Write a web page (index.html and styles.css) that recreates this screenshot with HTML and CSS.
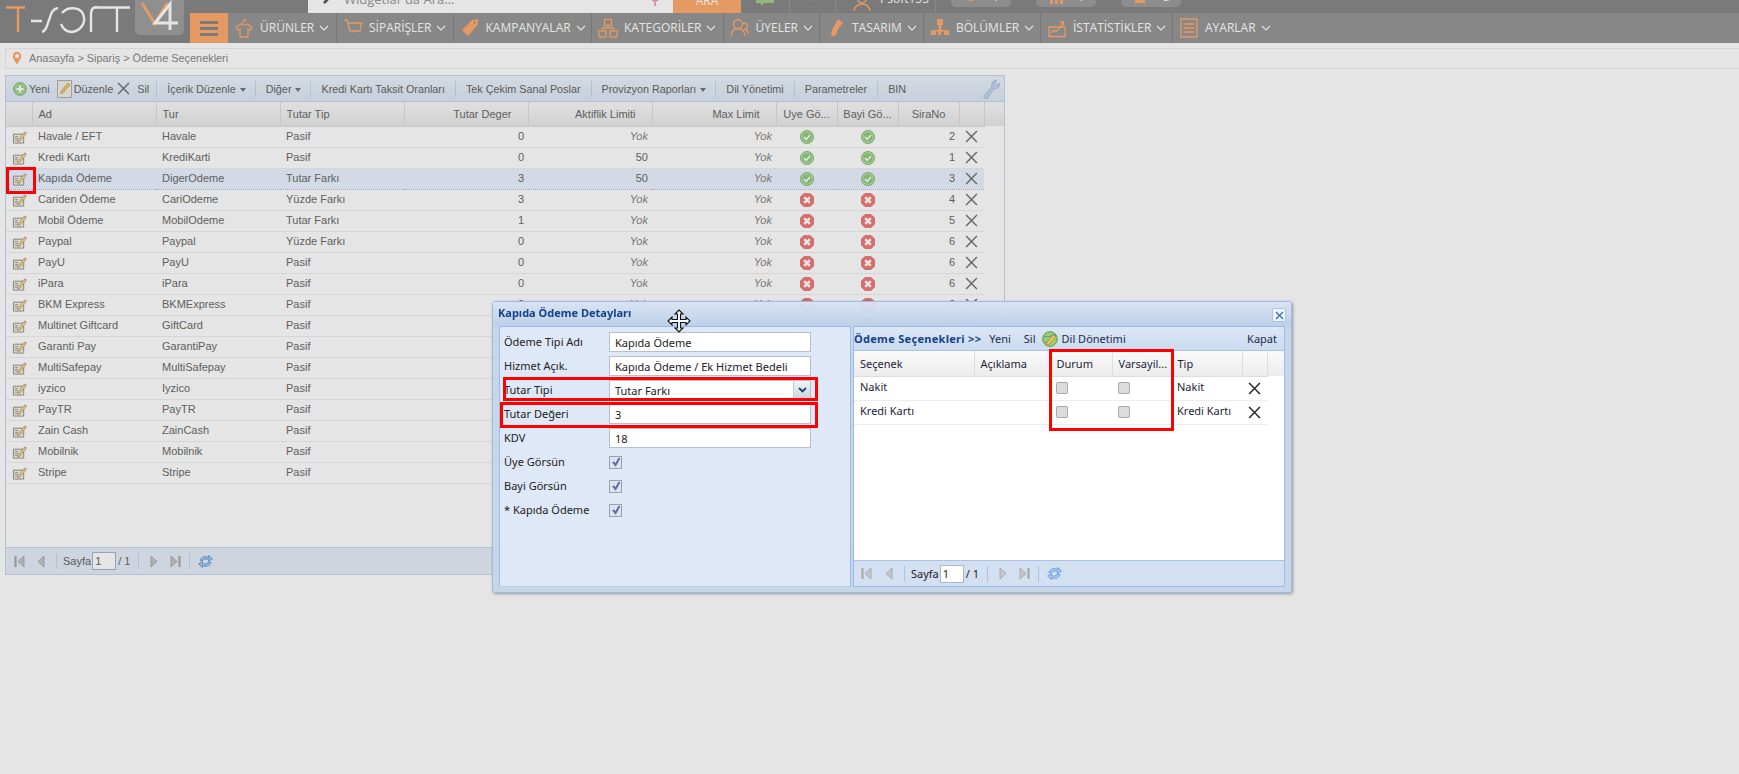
FILE: index.html
```html
<!DOCTYPE html>
<html lang="tr">
<head>
  <meta charset="UTF-8" />
  <meta name="viewport" content="width=device-width, initial-scale=1.0" />
  <title>Ödeme Seçenekleri</title>
  <link rel="stylesheet" href="styles.css">
</head>
<body>
  <!-- shared icons -->
  <svg class="sprite" width="0" height="0">
    <symbol id="i-ok" viewBox="0 0 14 14"><circle cx="7" cy="7" r="6.600" fill="#b4e0a6" stroke="#7fb56f" stroke-width=".8"/><circle cx="7" cy="7" r="4.800" fill="#93cb82"/><path d="M4 7l2.200 2.400L10 5" fill="none" stroke="#fff" stroke-width="1.600"/></symbol>
    <symbol id="i-no" viewBox="0 0 14 14"><path d="M4 .4h6L13.600 4v6L10 13.600H4L.4 10V4z" fill="#f27878" stroke="#e06a6a" stroke-width=".8"/><path d="M4.200 4.200l5.600 5.600M9.800 4.200l-5.600 5.600" stroke="#fff" stroke-width="2.600"/></symbol>
    <symbol id="i-del" viewBox="0 0 12 12"><path d="M1 1l10 10M11 1L1 11" fill="none" stroke="currentColor" stroke-width="1.400"/></symbol>
    <symbol id="i-edit" viewBox="0 0 16 15"><path d="M1.500 4.500h11v9.500h-11z" fill="#f6f4ec" stroke="#8d8d86"/><path d="M3 7h3.500M3 9h3.500M3 11h3.500" stroke="#9a9a92"/><path d="M6.500 10.500L13 2.500l2 1.500-6.500 8-2.500.8z" fill="#f0d596" stroke="#b39a64" stroke-width=".7"/><path d="M13 2.500l2 1.500.7-1L13.700 1.500z" fill="#d9907f"/></symbol>
    <symbol id="i-first" viewBox="0 0 11 13"><path d="M1.500 1v11" stroke="#a8a8a8" stroke-width="2.200"/><path d="M10 1v11L4 6.500z" fill="#c6c6c6" stroke="#a2a2a2" stroke-width=".8"/></symbol>
    <symbol id="i-prev" viewBox="0 0 8 13"><path d="M7 1v11L1 6.500z" fill="#c6c6c6" stroke="#a2a2a2" stroke-width=".8"/></symbol>
    <symbol id="i-next" viewBox="0 0 8 13"><path d="M1 1v11l6-5.500z" fill="#c6c6c6" stroke="#a2a2a2" stroke-width=".8"/></symbol>
    <symbol id="i-last" viewBox="0 0 11 13"><path d="M9.500 1v11" stroke="#a8a8a8" stroke-width="2.200"/><path d="M1 1v11l6-5.500z" fill="#c6c6c6" stroke="#a2a2a2" stroke-width=".8"/></symbol>
    <symbol id="i-refresh" viewBox="0 0 15 15"><path d="M2 6.500C3 3 7 1.500 10.500 3.500V1.500L14.500 5l-4 2.500V5.500C8 4.500 6 5 5 6.500z" fill="#a6cbf2" stroke="#4a8ad4" stroke-width=".7"/><path d="M13 8.500C12 12 8 13.500 4.500 11.500v2L.5 10l4-2.500v2c2.500 1 4.500.5 5.500-1z" fill="#a6cbf2" stroke="#4a8ad4" stroke-width=".7"/></symbol>
  </svg>

  <header class="topbar">
    <a class="logo" aria-label="T-soft V4">
      <svg width="190" height="43" viewBox="0 0 190 43" fill="none" stroke-width="2.400">
        <path d="M6 7.500h19M18 7.500V32" stroke="#ffab6f"/>
        <path d="M31 21h11M58 8c-6 1-7 6-9 12s-3 11-7 12" stroke="#fff"/>
        <path d="M62 13c5-6 17-7 21 1 4 9-3 17-11 18-5 0-9-3-11-8" stroke="#fff"/>
        <path d="M91 32V14c0-5 2-7 6-7M94 7.500h36M117 7.500V32" stroke="#fff"/>
        <path d="M135 0h49v30a5 5 0 0 1-5 5h-39a5 5 0 0 1-5-5z" fill="#a0a0a0" stroke="none"/>
        <path d="M142 3l13 21L167 3" stroke="#ffab6f" stroke-width="3"/>
        <path d="M170 30V4l-15 19h23" stroke="#fff" stroke-width="3"/>
      </svg>
    </a>
    <div class="topbar-main">
      <div class="top-row">
        <div class="search">
          <svg class="search-ico" width="14" height="14" viewBox="0 0 14 14"><path d="M2 12l4-4" stroke="#555" stroke-width="2.500"/><circle cx="9" cy="5" r="3.500" fill="none" stroke="#777"/></svg>
          <span>Widgetlar'da Ara...</span>
          <svg class="search-pin" width="12" height="16" viewBox="0 0 12 16"><circle cx="6" cy="6" r="4" fill="none" stroke="#e88fa8" stroke-width="1.500"/><path d="M6 10v5" stroke="#e88fa8" stroke-width="1.500"/></svg>
        </div>
        <button class="search-btn">ARA</button>
        <div class="top-cell top-chat"><svg width="18" height="16" viewBox="0 0 18 16"><path d="M0 0h18v13H8l-3 3v-3H0z" fill="#a6cf8a"/></svg></div>
        <div class="top-cell top-bell"><svg width="18" height="16" viewBox="0 0 18 16"><path d="M3 12c1-6 2-9 6-9s5 3 6 9z" fill="#8d8d8d"/></svg></div>
        <div class="top-cell top-user"><svg width="20" height="16" viewBox="0 0 20 16" fill="none"><path d="M2 15c1-5 4-7 8-7s7 2 8 7" stroke="#ffab6f" stroke-width="1.500"/><circle cx="10" cy="3" r="4" stroke="#ffab6f" stroke-width="1.500"/></svg><span>Psoft155</span></div>
        <div class="top-pills">
          <div class="pill"><svg width="16" height="16" viewBox="0 0 16 16"><circle cx="8" cy="5" r="5" fill="none" stroke="#ffab6f" stroke-width="2"/></svg><span>1</span></div>
          <div class="pill"><svg width="16" height="16" viewBox="0 0 16 16"><path d="M2 6h3v8H2zM7 6h3v8H7zM12 6h3v8h-3z" fill="#ffab6f"/></svg><span>1</span></div>
          <div class="pill"><svg width="16" height="16" viewBox="0 0 16 16"><path d="M2 6h10v7H2z" fill="#ffab6f"/></svg><span>a</span></div>
        </div>
      </div>
      <nav class="nav">
        <button class="nav-menu" aria-label="Menü"><span></span><span></span><span></span></button>
        <a class="nav-item"><svg class="nav-ico" viewBox="0 0 20 20"><path d="M7 6L2 9l1.500 3 2.500-1v8h8v-8l2.500 1L18 9l-5-3c-1 1.500-5 1.500-6 0zM8 6c0-2 2-1.500 2-3.500a1 1 0 1 1 2 .5" /></svg><span>ÜRÜNLER</span><svg class="chev" viewBox="0 0 10 6"><path d="M1 1l4 4 4-4"/></svg></a>
        <a class="nav-item"><svg class="nav-ico" viewBox="0 0 20 20"><path d="M1 2h3l3 11h10l1.500-8H5M8 17.500h.5M15 17.500h.5"/></svg><span>SİPARİŞLER</span><svg class="chev" viewBox="0 0 10 6"><path d="M1 1l4 4 4-4"/></svg></a>
        <a class="nav-item"><svg class="nav-ico solid" viewBox="0 0 20 20"><path d="M12 2l6-1-.5 6L8 18l-6-6z"/><circle cx="14.500" cy="4.500" r="1.200" fill="#979797"/></svg><span>KAMPANYALAR</span><svg class="chev" viewBox="0 0 10 6"><path d="M1 1l4 4 4-4"/></svg></a>
        <a class="nav-item"><svg class="nav-ico" viewBox="0 0 20 20"><path d="M6.500 1.500h7v6h-7zM1 13h7v6H1zM12 13h7v6h-7zM10 7.500V10M4.500 13v-3h11v3"/></svg><span>KATEGORİLER</span><svg class="chev" viewBox="0 0 10 6"><path d="M1 1l4 4 4-4"/></svg></a>
        <a class="nav-item"><svg class="nav-ico" viewBox="0 0 20 20"><circle cx="8" cy="6" r="4.500"/><path d="M1 18c.5-5 3-7.500 7-7.500s6.500 2.500 7 7.500M13 5.500a3 3 0 1 1 1 5.500c2.500.5 4 2 4.500 4.500"/></svg><span>ÜYELER</span><svg class="chev" viewBox="0 0 10 6"><path d="M1 1l4 4 4-4"/></svg></a>
        <a class="nav-item"><svg class="nav-ico solid" viewBox="0 0 20 20"><path d="M12 1l5 4-5 6-1 4-3 4-3-2 1-5 2-4z"/></svg><span>TASARIM</span><svg class="chev" viewBox="0 0 10 6"><path d="M1 1l4 4 4-4"/></svg></a>
        <a class="nav-item"><svg class="nav-ico solid" viewBox="0 0 20 20"><path d="M7 1h6v6h-1.500v5H19v5h-5v-3.500h-3v3.500H8v-3.500H6V17H1v-5h7.500V7H7z"/></svg><span>BÖLÜMLER</span><svg class="chev" viewBox="0 0 10 6"><path d="M1 1l4 4 4-4"/></svg></a>
        <a class="nav-item"><svg class="nav-ico" viewBox="0 0 20 20"><path d="M1 18.500h18M2 18.500V9h16v9.500M4 15l3-3 2 2 4-5 3-5M13 4h3.500v3.500"/></svg><span>İSTATİSTİKLER</span><svg class="chev" viewBox="0 0 10 6"><path d="M1 1l4 4 4-4"/></svg></a>
        <a class="nav-item nav-last"><svg class="nav-ico" viewBox="0 0 20 20"><path d="M2 1h16v18H2zM4.500 6h11M4.500 10h11M4.500 14h11M12 4.500v3M7 8.500v3M11 12.500v3"/></svg><span>AYARLAR</span><svg class="chev" viewBox="0 0 10 6"><path d="M1 1l4 4 4-4"/></svg></a>
      </nav>
    </div>
  </header>

  <div class="crumbs">
    <svg width="10" height="14" viewBox="0 0 10 14"><path d="M5 13.500C2 9 .8 7 .8 5a4.200 4.200 0 0 1 8.400 0c0 2-1.200 4-4.200 8.500z" fill="#ffab6f"/><circle cx="5" cy="5" r="2" fill="#fff"/></svg>
    <span>Anasayfa &gt; Sipariş &gt; Ödeme Seçenekleri</span>
  </div>

  <section class="panel">
    <div class="toolbar">
      <svg class="tb-plus" width="14" height="14" viewBox="0 0 14 14"><circle cx="7" cy="7" r="6.400" fill="#a7d69a" stroke="#84b878"/><path d="M7 3.500v7M3.500 7h7" stroke="#fff" stroke-width="2"/></svg>
      <a class="tb-yeni">Yeni</a>
      <svg class="tb-note" width="15" height="18" viewBox="0 0 15 18"><path d="M.5.500h14v17H.5z" fill="#f1efe8" stroke="#b2b2aa"/><path d="M3.500 14l1-3.500L11 3l2 2-6.500 7.500z" fill="#f2c46c" stroke="#c49a4c" stroke-width=".6"/></svg>
      <a class="tb-duz">Düzenle</a>
      <svg class="tb-x" width="13" height="13"><use href="#i-del"/></svg>
      <a class="tb-sil">Sil</a>
      <i class="sep sep-first"></i>
      <a>İçerik Düzenle<b class="caret"></b></a>
      <i class="sep"></i>
      <a>Diğer<b class="caret"></b></a>
      <i class="sep"></i>
      <a>Kredi Kartı Taksit Oranları</a>
      <i class="sep"></i>
      <a>Tek Çekim Sanal Poslar</a>
      <i class="sep"></i>
      <a>Provizyon Raporları<b class="caret"></b></a>
      <i class="sep"></i>
      <a>Dil Yönetimi</a>
      <i class="sep"></i>
      <a>Parametreler</a>
      <i class="sep"></i>
      <a>BIN</a>
      <svg class="tb-wrench" width="17" height="20" viewBox="0 0 17 20"><path d="M1 17L9 7c-1-3 1-6 5-6l-2 3 2 2 2.500-2c.5 4-2.500 6.500-5.500 5.500L4 20c-2 0-3.500-1-3-3z" fill="#c6d6ee" stroke="#9db6da" stroke-width=".7"/></svg>
    </div>

    <div class="grid">
      <table class="list">
        <colgroup><col class="c-ico"><col class="c-w"><col class="c-w"><col class="c-w"><col class="c-w"><col class="c-w"><col class="c-w"><col class="c-s"><col class="c-s"><col class="c-s"><col class="c-ico2"></colgroup>
        <thead>
          <tr><th></th><th>Ad</th><th>Tur</th><th>Tutar Tip</th><th class="num">Tutar Deger</th><th class="num">Aktiflik Limiti</th><th class="num">Max Limit</th><th class="mid">Uye Gö...</th><th class="mid">Bayi Gö...</th><th class="mid">SiraNo</th><th></th></tr>
        </thead>
        <tbody>
          <tr><td class="ic"><svg width="15" height="14"><use href="#i-edit"/></svg></td><td>Havale / EFT</td><td>Havale</td><td>Pasif</td><td class="val">0</td><td class="val"><em>Yok</em></td><td class="val"><em>Yok</em></td><td class="ic"><svg width="14" height="14"><use href="#i-ok"/></svg></td><td class="ic"><svg width="14" height="14"><use href="#i-ok"/></svg></td><td class="val">2</td><td class="ic"><svg class="del" width="13" height="13"><use href="#i-del"/></svg></td></tr>
          <tr><td class="ic"><svg width="15" height="14"><use href="#i-edit"/></svg></td><td>Kredi Kartı</td><td>KrediKarti</td><td>Pasif</td><td class="val">0</td><td class="val">50</td><td class="val"><em>Yok</em></td><td class="ic"><svg width="14" height="14"><use href="#i-ok"/></svg></td><td class="ic"><svg width="14" height="14"><use href="#i-ok"/></svg></td><td class="val">1</td><td class="ic"><svg class="del" width="13" height="13"><use href="#i-del"/></svg></td></tr>
          <tr class="sel"><td class="ic"><svg width="15" height="14"><use href="#i-edit"/></svg></td><td>Kapıda Ödeme</td><td>DigerOdeme</td><td>Tutar Farkı</td><td class="val">3</td><td class="val">50</td><td class="val"><em>Yok</em></td><td class="ic"><svg width="14" height="14"><use href="#i-ok"/></svg></td><td class="ic"><svg width="14" height="14"><use href="#i-ok"/></svg></td><td class="val">3</td><td class="ic"><svg class="del" width="13" height="13"><use href="#i-del"/></svg></td></tr>
          <tr><td class="ic"><svg width="15" height="14"><use href="#i-edit"/></svg></td><td>Cariden Ödeme</td><td>CariOdeme</td><td>Yüzde Farkı</td><td class="val">3</td><td class="val"><em>Yok</em></td><td class="val"><em>Yok</em></td><td class="ic"><svg width="14" height="14"><use href="#i-no"/></svg></td><td class="ic"><svg width="14" height="14"><use href="#i-no"/></svg></td><td class="val">4</td><td class="ic"><svg class="del" width="13" height="13"><use href="#i-del"/></svg></td></tr>
          <tr><td class="ic"><svg width="15" height="14"><use href="#i-edit"/></svg></td><td>Mobil Ödeme</td><td>MobilOdeme</td><td>Tutar Farkı</td><td class="val">1</td><td class="val"><em>Yok</em></td><td class="val"><em>Yok</em></td><td class="ic"><svg width="14" height="14"><use href="#i-no"/></svg></td><td class="ic"><svg width="14" height="14"><use href="#i-no"/></svg></td><td class="val">5</td><td class="ic"><svg class="del" width="13" height="13"><use href="#i-del"/></svg></td></tr>
          <tr><td class="ic"><svg width="15" height="14"><use href="#i-edit"/></svg></td><td>Paypal</td><td>Paypal</td><td>Yüzde Farkı</td><td class="val">0</td><td class="val"><em>Yok</em></td><td class="val"><em>Yok</em></td><td class="ic"><svg width="14" height="14"><use href="#i-no"/></svg></td><td class="ic"><svg width="14" height="14"><use href="#i-no"/></svg></td><td class="val">6</td><td class="ic"><svg class="del" width="13" height="13"><use href="#i-del"/></svg></td></tr>
          <tr><td class="ic"><svg width="15" height="14"><use href="#i-edit"/></svg></td><td>PayU</td><td>PayU</td><td>Pasif</td><td class="val">0</td><td class="val"><em>Yok</em></td><td class="val"><em>Yok</em></td><td class="ic"><svg width="14" height="14"><use href="#i-no"/></svg></td><td class="ic"><svg width="14" height="14"><use href="#i-no"/></svg></td><td class="val">6</td><td class="ic"><svg class="del" width="13" height="13"><use href="#i-del"/></svg></td></tr>
          <tr><td class="ic"><svg width="15" height="14"><use href="#i-edit"/></svg></td><td>iPara</td><td>iPara</td><td>Pasif</td><td class="val">0</td><td class="val"><em>Yok</em></td><td class="val"><em>Yok</em></td><td class="ic"><svg width="14" height="14"><use href="#i-no"/></svg></td><td class="ic"><svg width="14" height="14"><use href="#i-no"/></svg></td><td class="val">6</td><td class="ic"><svg class="del" width="13" height="13"><use href="#i-del"/></svg></td></tr>
          <tr><td class="ic"><svg width="15" height="14"><use href="#i-edit"/></svg></td><td>BKM Express</td><td>BKMExpress</td><td>Pasif</td><td class="val">0</td><td class="val"><em>Yok</em></td><td class="val"><em>Yok</em></td><td class="ic"><svg width="14" height="14"><use href="#i-no"/></svg></td><td class="ic"><svg width="14" height="14"><use href="#i-no"/></svg></td><td class="val">6</td><td class="ic"><svg class="del" width="13" height="13"><use href="#i-del"/></svg></td></tr>
          <tr><td class="ic"><svg width="15" height="14"><use href="#i-edit"/></svg></td><td>Multinet Giftcard</td><td>GiftCard</td><td>Pasif</td><td class="val">0</td><td class="val"><em>Yok</em></td><td class="val"><em>Yok</em></td><td class="ic"><svg width="14" height="14"><use href="#i-no"/></svg></td><td class="ic"><svg width="14" height="14"><use href="#i-no"/></svg></td><td class="val">7</td><td class="ic"><svg class="del" width="13" height="13"><use href="#i-del"/></svg></td></tr>
          <tr><td class="ic"><svg width="15" height="14"><use href="#i-edit"/></svg></td><td>Garanti Pay</td><td>GarantiPay</td><td>Pasif</td><td colspan="7"></td></tr>
          <tr><td class="ic"><svg width="15" height="14"><use href="#i-edit"/></svg></td><td>MultiSafepay</td><td>MultiSafepay</td><td>Pasif</td><td colspan="7"></td></tr>
          <tr><td class="ic"><svg width="15" height="14"><use href="#i-edit"/></svg></td><td>iyzico</td><td>Iyzico</td><td>Pasif</td><td colspan="7"></td></tr>
          <tr><td class="ic"><svg width="15" height="14"><use href="#i-edit"/></svg></td><td>PayTR</td><td>PayTR</td><td>Pasif</td><td colspan="7"></td></tr>
          <tr><td class="ic"><svg width="15" height="14"><use href="#i-edit"/></svg></td><td>Zain Cash</td><td>ZainCash</td><td>Pasif</td><td colspan="7"></td></tr>
          <tr><td class="ic"><svg width="15" height="14"><use href="#i-edit"/></svg></td><td>Mobilnik</td><td>Mobilnik</td><td>Pasif</td><td colspan="7"></td></tr>
          <tr><td class="ic"><svg width="15" height="14"><use href="#i-edit"/></svg></td><td>Stripe</td><td>Stripe</td><td>Pasif</td><td colspan="7"></td></tr>
        </tbody>
      </table>
    </div>

    <div class="pager">
      <svg class="pg-first" width="11" height="13"><use href="#i-first"/></svg>
      <svg class="pg-prev" width="8" height="13"><use href="#i-prev"/></svg>
      <i class="sep sep-a"></i>
      <span>Sayfa</span>
      <input class="pg-input" value="1">
      <span>/ 1</span>
      <i class="sep sep-b"></i>
      <svg class="pg-next" width="8" height="13"><use href="#i-next"/></svg>
      <svg class="pg-last" width="11" height="13"><use href="#i-last"/></svg>
      <i class="sep sep-c"></i>
      <svg class="pg-ref" width="15" height="15"><use href="#i-refresh"/></svg>
    </div>
  </section>

  <div class="mask"></div>

  <div class="win">
    <div class="win-title">
      <span>Kapıda Ödeme Detayları</span>
      <button class="win-close" aria-label="Kapat"><svg width="9" height="9" viewBox="0 0 9 9"><path d="M1 1l7 7M8 1L1 8" stroke="#2f6fb8" stroke-width="1.400"/></svg></button>
    </div>
    <div class="win-body">
      <form class="form">
        <label class="row"><span>Ödeme Tipi Adı</span><input value="Kapıda Ödeme"></label>
        <label class="row"><span>Hizmet Açık.</span><input value="Kapıda Ödeme / Ek Hizmet Bedeli"></label>
        <label class="row"><span>Tutar Tipi</span><div class="combo"><input value="Tutar Farkı"><b class="combo-btn"><svg width="9" height="6" viewBox="0 0 9 6"><path d="M1 1l3.500 3.500L8 1" fill="none" stroke="#1f3f7a" stroke-width="1.800"/></svg></b></div></label>
        <label class="row"><span>Tutar Değeri</span><input value="3"></label>
        <label class="row"><span>KDV</span><input value="18"></label>
        <div class="row"><span>Üye Görsün</span><i class="tick"><svg width="10" height="10" viewBox="0 0 10 10"><path d="M2 5l2.500 3L8.500 1" fill="none" stroke="#5a6fa8" stroke-width="2"/></svg></i></div>
        <div class="row"><span>Bayi Görsün</span><i class="tick"><svg width="10" height="10" viewBox="0 0 10 10"><path d="M2 5l2.500 3L8.500 1" fill="none" stroke="#5a6fa8" stroke-width="2"/></svg></i></div>
        <div class="row"><span>* Kapıda Ödeme</span><i class="tick"><svg width="10" height="10" viewBox="0 0 10 10"><path d="M2 5l2.500 3L8.500 1" fill="none" stroke="#5a6fa8" stroke-width="2"/></svg></i></div>
      </form>

      <div class="options">
        <div class="opt-bar">
          <strong>Ödeme Seçenekleri &gt;&gt;</strong>
          <a class="opt-yeni">Yeni</a>
          <a class="opt-sil">Sil</a>
          <svg class="opt-globe" width="16" height="16" viewBox="0 0 16 16"><circle cx="8" cy="8" r="7.300" fill="#9ccf6a" stroke="#5f9a3e"/><path d="M2 6c3-2 4 1 7-1s3-2 5 0M3 12c2-2 4-1 6-3" stroke="#4f8fc0" fill="none"/><path d="M4 15l1-4 7-7 2 2-7 7z" fill="#f2c060" stroke="#a9803c" stroke-width=".6"/></svg>
          <a>Dil Dönetimi</a>
          <a class="opt-close">Kapat</a>
        </div>
        <div class="opt-list">
          <table class="opts">
            <colgroup><col class="o-1"><col class="o-2"><col class="o-3"><col class="o-4"><col class="o-5"><col class="o-6"></colgroup>
            <thead><tr><th>Seçenek</th><th>Açıklama</th><th>Durum</th><th>Varsayil...</th><th>Tip</th><th></th></tr></thead>
            <tbody>
              <tr><td>Nakit</td><td></td><td><i class="box"></i></td><td><i class="box"></i></td><td>Nakit</td><td class="opt-del"><svg width="13" height="13"><use href="#i-del"/></svg></td></tr>
              <tr><td>Kredi Kartı</td><td></td><td><i class="box"></i></td><td><i class="box"></i></td><td>Kredi Kartı</td><td class="opt-del"><svg width="13" height="13"><use href="#i-del"/></svg></td></tr>
            </tbody>
          </table>
        </div>
        <div class="pager opt-pager">
          <svg class="pg-first" width="11" height="13"><use href="#i-first"/></svg>
          <svg class="pg-prev" width="8" height="13"><use href="#i-prev"/></svg>
          <i class="sep sep-a"></i>
          <span>Sayfa</span>
          <input class="pg-input" value="1">
          <span>/ 1</span>
          <i class="sep sep-b"></i>
          <svg class="pg-next" width="8" height="13"><use href="#i-next"/></svg>
          <svg class="pg-last" width="11" height="13"><use href="#i-last"/></svg>
          <i class="sep sep-c"></i>
          <svg class="pg-ref" width="15" height="15"><use href="#i-refresh"/></svg>
        </div>
      </div>
    </div>
  </div>

  <!-- red marks from the help screenshot -->
  <div class="mark mark-edit"></div>
  <div class="mark mark-tip"></div>
  <div class="mark mark-deger"></div>
  <div class="mark mark-durum"></div>

  <svg class="drag-cursor" width="24" height="24" viewBox="0 0 24 24"><path d="M12 1l4 4h-2.500v5.500H19V8l4 4-4 4v-2.500h-5.500V19H16l-4 4-4-4h2.500v-5.500H5V16l-4-4 4-4v2.500h5.500V5H8z" fill="#fff" stroke="#111" stroke-width="1.100"/></svg>
</body>
</html>
```

FILE: styles.css
```css
* { box-sizing: border-box; }
html, body { height: 100%; }
body { margin: 0; position: relative; overflow: hidden; background: #fff; font-family: "Liberation Sans", Arial, sans-serif; font-size: 11px; color: #6b6b6b; }
.sprite { position: absolute; }
svg { display: block; flex: none; }
a { cursor: pointer; }
input { font: inherit; }

/* header */
.topbar { display: flex; height: 43px; background: #888; }
.logo { width: 190px; flex: none; }
.topbar-main { flex: 1; display: flex; flex-direction: column; min-width: 0; }
.top-row { height: 13px; display: flex; align-items: flex-end; overflow: hidden; padding-left: 118px; color: #fff; font-family: "Open Sans", sans-serif; font-size: 12px; }
.search { width: 365px; height: 13px; background: #fff; color: #999; display: flex; align-items: flex-end; padding-left: 14px; gap: 8px; line-height: 15px; font-size: 13px; }
.search span { flex: 1; height: 15px; margin-bottom: 6px; }
.search-ico { margin-bottom: 8px; }
.search-pin { margin: 0 12px 6px 0; }
.search-btn { width: 68px; height: 13px; border: 0; padding: 0 0 12px; background: #ffab6f; color: #fff; font: inherit; line-height: 0; }
.top-cell { height: 13px; display: flex; align-items: flex-end; justify-content: center; border-right: 1px solid #9a9a9a; gap: 8px; }
.top-chat { width: 49px; }
.top-chat svg { margin-bottom: 7px; }
.top-bell { width: 46px; }
.top-bell svg { margin-bottom: 8px; }
.top-user { width: 100px; justify-content: flex-start; padding-left: 16px; line-height: 15px; }
.top-user svg { margin-bottom: 1px; }
.top-user span { margin-bottom: 7px; }
.top-pills { display: flex; align-self: flex-start; gap: 25px; padding-left: 15px; }
.pill { width: 60px; height: 7px; overflow: hidden; background: #9e9e9e; border-radius: 0 0 5px 5px; display: flex; align-items: flex-end; justify-content: center; gap: 14px; line-height: 15px; }
.pill svg { margin-bottom: 1px; }
.pill span { margin-bottom: 3px; }

.nav { height: 30px; display: grid; grid-template-columns: 38px 109px 116.5px 138.5px 131.5px 96.5px 104px 117px 132px 117px; justify-content: start; background: #979797; }
.nav-menu { border: 0; padding: 0 10px; background: #ffab6f; display: flex; flex-direction: column; justify-content: center; gap: 3px; }
.nav-menu span { display: block; height: 3px; background: #8a8a8a; }
.nav-item { display: flex; align-items: center; padding: 0 0 1px 6px; color: #fff; font-family: "Open Sans", sans-serif; font-size: 12px; border-right: 1px solid #848484; white-space: nowrap; }
.nav-last { border-right: 0; }
.nav-ico { width: 20px; height: 20px; margin-right: 6px; fill: none; stroke: #ffab6f; stroke-width: 1.300; }
.nav-ico.solid { fill: #ffab6f; stroke: none; }
.chev { width: 10px; height: 6px; margin-left: 5px; fill: none; stroke: #fff; stroke-width: 1.100; }

/* breadcrumb */
.crumbs { height: 21px; margin: 5px 0 6px 5px; display: flex; align-items: center; gap: 7px; padding: 0 0 2px 6px; background: #fff; border: 1px solid #ececec; border-right: 0; color: #888; font-size: 10.900px; }

/* main panel */
.panel { width: 1000px; height: 500px; margin-left: 5px; display: flex; flex-direction: column; border: 1px solid #c5d8f0; }
.toolbar { height: 26px; display: flex; align-items: center; padding-left: 7px; background: linear-gradient(#ecf3fc, #dde8f5); border-bottom: 1px solid #c5d8f0; white-space: nowrap; color: #666; font-size: 10.800px; }
.toolbar .sep { margin: 0 10px; }
.toolbar .sep-first { margin-left: 7px; }
.sep { display: block; width: 1px; height: 16px; background: #c5d8f0; flex: none; }
.caret { display: inline-block; margin: 0 -1px 0 4px; vertical-align: 1px; border: 3px solid transparent; border-top: 4px solid #777; border-bottom: 0; }
.tb-yeni { margin-left: 2px; }
.tb-note { margin: 0 2px 0 7px; }
.tb-x { margin-left: 4px; color: #777; }
.tb-sil { margin-left: 7px; }
.tb-wrench { margin-left: auto; margin-right: 4px; }

.grid { flex: 1; background: #fff linear-gradient(#fafafa, #e9e9e9) 0 0 / 100% 24px no-repeat; }
.list { width: 978px; table-layout: fixed; border-collapse: collapse; }
.c-ico { width: 26px; } .c-w { width: 124px; } .c-s { width: 61px; } .c-ico2 { width: 25px; }
.list th { height: 24px; padding: 0 4px 0 6px; font-weight: normal; text-align: left; color: #6b6b6b; border-right: 1px solid #ddd; border-bottom: 1px solid #ddd; white-space: nowrap; overflow: hidden; }
.list th.num { text-align: right; padding-right: 16px; }
.list th.mid { text-align: center; padding: 0; }
.list td { height: 21px; padding: 0 4px 2px 6px; border-bottom: 1px solid #efefef; white-space: nowrap; overflow: hidden; }
.list td.val { text-align: right; padding-right: 4px; }
.list td.ic { padding: 0; }
.list td.ic svg { margin: 0 auto; }
.list em { color: #888; }
.list .del { color: #777; }
.list .sel td { background: #ecf3ff; border-top: 1px dotted #a8c0ea; border-bottom: 1px dotted #a8c0ea; }

.pager { height: 27px; flex: none; display: flex; align-items: center; padding-left: 8px; background: #e6eef9; border-top: 1px solid #c5d8f0; color: #666; white-space: nowrap; }
.pg-prev { margin-left: 12px; }
.sep-a { margin: 0 6px 0 11px; }
.sep-b { margin: 0 11px 0 8px; }
.sep-c { margin: 0 8px 0 8px; }
.pg-input { width: 24px; height: 18px; margin: 0 2px 0 1px; padding: 0 2px; border: 1px solid #a8b8cc; background: #fff; color: inherit; }
.pg-last { margin-left: 12px; }

/* dimmed page */
.mask { position: fixed; inset: 0; background: rgba(0, 0, 0, .1); }

/* detail window */
.win { position: absolute; left: 492px; top: 301px; width: 800px; height: 292px; display: flex; flex-direction: column; border: 1px solid #9dbbe4; border-radius: 3px; background: rgba(196, 212, 234, .9); box-shadow: 1px 1px 3px rgba(0, 0, 0, .35); font-family: "Noto Sans", sans-serif; color: #222; }
.win-title { height: 24px; flex: none; display: flex; align-items: center; justify-content: space-between; padding: 0 5px 4px; background: linear-gradient(rgba(222, 232, 245, .75), rgba(186, 206, 232, .85)); color: #15428b; font-weight: bold; font-size: 11px; }
.win-close { width: 14px; height: 14px; margin-top: 6px; padding: 0; display: flex; align-items: center; justify-content: center; border: 1px solid #a7c3e6; border-radius: 2px; background: #f1f6fd; }
.win-body { flex: 1; display: flex; gap: 2px; padding: 0 6px 5px; min-height: 0; }

.form { width: 352px; flex: none; padding: 3px 0 0 4px; background: #dfe8f6; border: 1px solid #99bbe8; border-bottom-color: #b8cce8; }
.row { height: 24px; display: flex; align-items: center; }
.row > span { width: 105px; flex: none; margin-bottom: 1px; }
.row input { width: 202px; height: 20px; padding: 0 5px; border: 1px solid #b5bfd0; background: #fff; color: #222; }
.combo { width: 202px; height: 20px; display: flex; border: 1px solid #b5bfd0; background: #fff; }
.combo input { flex: 1; min-width: 0; height: 18px; border: 0; }
.combo-btn { width: 17px; display: flex; align-items: center; justify-content: center; background: linear-gradient(#f2f4f7, #ccd3dc); border-left: 1px solid #c3cad6; }
.tick { width: 13px; height: 13px; display: flex; align-items: center; justify-content: center; background: #dfe4ec; border: 1px solid #9aa3b0; }

.options { flex: 1; display: flex; flex-direction: column; min-width: 0; background: #fff; border: 1px solid #99bbe8; }
.opt-bar { height: 24px; flex: none; display: flex; align-items: center; background: linear-gradient(#dbe7f6, #cbdbf0); border-bottom: 1px solid #a9c2e6; white-space: nowrap; color: #1d2a4a; }
.opt-bar strong { color: #15428b; letter-spacing: .3px; }
.opt-yeni { margin-left: 8px; }
.opt-sil { margin-left: 13px; }
.opt-globe { margin: 0 4px 0 6px; }
.opt-close { margin-left: auto; margin-right: 7px; }
.opt-list { flex: 1; background: #fff linear-gradient(#fafafa, #ececec) 0 0 / 100% 25px no-repeat; }
.opts { width: 413px; table-layout: fixed; border-collapse: collapse; color: #1d1d3a; }
.o-1 { width: 120px; } .o-2 { width: 76px; } .o-3 { width: 62px; } .o-4 { width: 59px; } .o-5 { width: 71px; } .o-6 { width: 25px; }
.opts th { height: 25px; padding: 1px 0 0 6px; font-weight: normal; text-align: left; border-right: 1px solid #ddd; border-bottom: 1px solid #ddd; white-space: nowrap; overflow: hidden; }
.opts td { height: 24px; padding: 0 0 4px 6px; border-bottom: 1px solid #ededed; white-space: nowrap; overflow: hidden; }
.opts td.opt-del { padding-left: 6px; color: #222; }
.opt-del svg { margin-top: 4px; }
.box { display: block; width: 12px; height: 12px; margin-top: 4px; background: #dcdcdc; border: 1px solid #aaa; border-radius: 2px; }
.opt-pager { height: 26px; padding-left: 7px; background: #d3e0f1; border-top: 1px solid #a9c2e6; color: #222; }
.opt-pager .pg-prev { margin-left: 13px; }
.opt-pager .sep { background: #a9c2e6; }

/* annotations */
.mark { position: absolute; border: 3px solid #f00; }
.mark-edit { left: 6px; top: 167px; width: 30px; height: 27px; }
.mark-tip { left: 503px; top: 377px; width: 315px; height: 24px; }
.mark-deger { left: 500px; top: 402px; width: 318px; height: 26px; }
.mark-durum { left: 1049px; top: 349px; width: 125px; height: 82px; }
.drag-cursor { position: absolute; left: 667px; top: 309px; }
```
